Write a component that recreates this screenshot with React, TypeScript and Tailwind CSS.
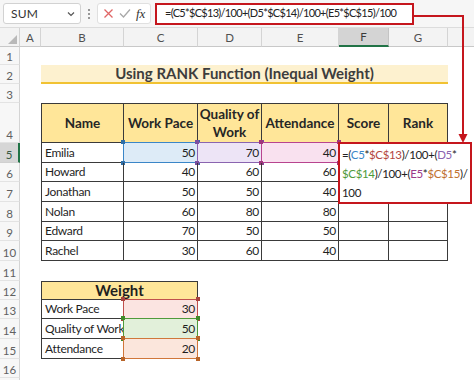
import React from "react";

const COLS = "grid grid-cols-[20px_21px_83px_74px_64px_77px_50px_59px_1fr]";
const BD = "border-[#3a3a3a]";

type Hl = { box: string; sq: string };
const HL_BLUE: Hl = { box: "border-[#3a86c8] bg-[#ddebf7]", sq: "bg-[#2f6fa8]" };
const HL_PURPLE: Hl = { box: "border-[#8a64b0] bg-[#ede4f6]", sq: "bg-[#7a4fa0]" };
const HL_MAGENTA: Hl = { box: "border-[#b8438f] bg-[#f9e1ef]", sq: "bg-[#a0357c]" };
const HL_RED: Hl = { box: "border-[#c0504d] bg-[#fbe4e1]", sq: "bg-[#a8443f]" };
const HL_GREEN: Hl = { box: "border-[#4f9a3a] bg-[#e2f0da]", sq: "bg-[#3f8a2a]" };
const HL_ORANGE: Hl = { box: "border-[#d0773a] bg-[#fbe6dc]", sq: "bg-[#b8652a]" };

function Sel({ hl }: { hl: Hl }) {
  return (
    <div className={`pointer-events-none absolute -left-px -top-px -right-px -bottom-px border-[1.5px] ${hl.box}`}>
      <span className={`absolute -left-[3px] -top-[3px] h-[4px] w-[4px] ${hl.sq}`} />
      <span className={`absolute -right-[3px] -top-[3px] h-[4px] w-[4px] ${hl.sq}`} />
      <span className={`absolute -left-[3px] -bottom-[3px] h-[4px] w-[4px] ${hl.sq}`} />
      <span className={`absolute -right-[3px] -bottom-[3px] h-[4px] w-[4px] ${hl.sq}`} />
    </div>
  );
}

function TCell({
  children,
  first = false,
  num = false,
  hl,
}: {
  children?: React.ReactNode;
  first?: boolean;
  num?: boolean;
  hl?: Hl;
}) {
  return (
    <div className={`relative min-h-0 overflow-visible border-r border-b ${first ? "border-l" : ""} ${BD}`}>
      {hl && <Sel hl={hl} />}
      <div
        className={`relative flex h-full items-center whitespace-nowrap text-[12px] leading-none tracking-[-0.3px] text-[#1f1f1f] ${
          num ? "justify-end pr-[2px]" : "pl-[3px]"
        }`}
      >
        {children}
      </div>
    </div>
  );
}

function RowNum({ n, active = false }: { n: number; active?: boolean }) {
  return (
    <div
      className={`flex items-end justify-center pb-[2px] border-b text-[11.5px] leading-none ${
        active
          ? "border-b-[#d0d0d0] border-r-2 border-r-[#217346] bg-[#d6d6d6] text-[#3a5a44]"
          : "border-b-[#e3e3e3] border-r border-r-[#d4d4d4] bg-[#f7f7f7] text-[#606060]"
      }`}
    >
      {n}
    </div>
  );
}

function HeadCell({ children, first = false }: { children: React.ReactNode; first?: boolean }) {
  return (
    <div
      className={`flex min-h-0 items-center justify-center border-t border-r border-b ${first ? "border-l" : ""} ${BD} bg-[#ffe699] text-center text-[13.5px] font-bold leading-[18px] text-[#262626]`}
    >
      <span className="whitespace-nowrap">{children}</span>
    </div>
  );
}

const rows = [
  { name: "Emilia", c: 50, d: 70, e: 40 },
  { name: "Howard", c: 40, d: 60, e: 60 },
  { name: "Jonathan", c: 50, d: 50, e: 40 },
  { name: "Nolan", c: 60, d: 80, e: 80 },
  { name: "Edward", c: 70, d: 50, e: 50 },
  { name: "Rachel", c: 30, d: 60, e: 40 },
];
const rowHeights = ["h-[20px]", "h-[19px]", "h-[20px]", "h-[20px]", "h-[19px]", "h-[20px]"];

function Empty() {
  return <div />;
}

export default function App() {
  return (
    <div className="relative h-[380px] w-[474px] overflow-hidden bg-white font-['Lato','Open_Sans',sans-serif]">
      {/* Formula bar */}
      <div className="flex h-[28px] items-center border-b border-[#dcdcdc] bg-[#f6f6f6]">
        <div className="ml-[3px] flex h-[21px] w-[78px] items-center justify-between rounded-[3px] border border-[#d2d2d2] bg-white pl-[7px] pr-[4px]">
          <span className="text-[12px] text-[#333] tracking-[0.2px]">SUM</span>
          <svg width="10" height="10" viewBox="0 0 10 10">
            <path d="M2 3.5 L5 6.5 L8 3.5" fill="none" stroke="#555" strokeWidth="1.2" />
          </svg>
        </div>
        <div className="flex w-[16px] flex-col items-center justify-center gap-[2px]">
          <span className="h-[2px] w-[2px] rounded-full bg-[#777]" />
          <span className="h-[2px] w-[2px] rounded-full bg-[#777]" />
          <span className="h-[2px] w-[2px] rounded-full bg-[#777]" />
        </div>
        <div className="flex h-[21px] w-[54px] items-center justify-around rounded-[3px] border border-[#e0e0e0] bg-white px-[2px]">
          <svg width="11" height="11" viewBox="0 0 11 11">
            <path d="M1.5 1.5 L9.5 9.5 M9.5 1.5 L1.5 9.5" stroke="#e06666" strokeWidth="1.3" />
          </svg>
          <svg width="12" height="11" viewBox="0 0 12 11">
            <path d="M1 5.5 L4.5 9 L11 1.5" fill="none" stroke="#a8a8a8" strokeWidth="1.3" />
          </svg>
          <span className="font-['Liberation_Serif',serif] text-[13px] italic text-[#333]">fx</span>
        </div>
        <div className="ml-[4px] flex h-[22px] w-[259px] items-center border-2 border-[#c5161d] bg-white pl-[8px]">
          <span className="whitespace-nowrap text-[11px] tracking-[-0.7px] text-[#222]">
            =(C5*$C$13)/100+(D5*$C$14)/100+(E5*$C$15)/100
          </span>
        </div>
      </div>

      {/* Column header */}
      <div className={`${COLS} h-[18px] bg-[#f3f3f3] text-[11.5px] text-[#505050]`}>
        <div className="relative border-r border-b border-r-[#d4d4d4] border-b-[#c8c8c8]">
          <svg className="absolute bottom-[2px] right-[2px]" width="9" height="9" viewBox="0 0 9 9">
            <polygon points="9,0 9,9 0,9" fill="#b9b9b9" />
          </svg>
        </div>
        {["A", "B", "C", "D", "E"].map((l) => (
          <div key={l} className="flex items-center justify-center border-r border-b border-r-[#d4d4d4] border-b-[#c8c8c8]">
            {l}
          </div>
        ))}
        <div className="flex items-center justify-center border-r border-b-2 border-r-[#c4c4c4] border-b-[#217346] bg-[#d4d4d4] text-[#3a3a3a]">
          F
        </div>
        <div className="flex items-center justify-center border-r border-b border-r-[#d4d4d4] border-b-[#c8c8c8]">G</div>
        <div className="border-b border-b-[#c8c8c8]" />
      </div>

      {/* Row 1 */}
      <div className={`${COLS} h-[19px]`}>
        <RowNum n={1} />
      </div>
      {/* Row 2 title */}
      <div className={`${COLS} h-[19px]`}>
        <RowNum n={2} />
        <Empty />
        <div className="col-span-6 flex items-center justify-center border-b-2 border-[#f1c232] bg-[#fdf1cf] text-[15px] font-bold leading-none text-[#3d3d3d]">
          Using RANK Function (Inequal Weight)
        </div>
      </div>
      {/* Row 3 */}
      <div className={`${COLS} h-[19px]`}>
        <RowNum n={3} />
      </div>
      {/* Row 4 header */}
      <div className={`${COLS} h-[40px] grid-rows-[40px]`}>
        <RowNum n={4} />
        <Empty />
        <HeadCell first>Name</HeadCell>
        <HeadCell>Work Pace</HeadCell>
        <HeadCell>
          Quality of
          <br />
          Work
        </HeadCell>
        <HeadCell>Attendance</HeadCell>
        <HeadCell>Score</HeadCell>
        <HeadCell>Rank</HeadCell>
      </div>
      {/* Rows 5-10 */}
      {rows.map((r, i) => (
        <div key={r.name} className={`${COLS} ${rowHeights[i]}`}>
          <RowNum n={i + 5} active={i === 0} />
          <Empty />
          <TCell first>{r.name}</TCell>
          <TCell num hl={i === 0 ? HL_BLUE : undefined}>{r.c}</TCell>
          <TCell num hl={i === 0 ? HL_PURPLE : undefined}>{r.d}</TCell>
          <TCell num hl={i === 0 ? HL_MAGENTA : undefined}>{r.e}</TCell>
          <TCell />
          <TCell />
        </div>
      ))}
      {/* Row 11 */}
      <div className={`${COLS} h-[20px]`}>
        <RowNum n={11} />
      </div>
      {/* Row 12 */}
      <div className={`${COLS} h-[19px]`}>
        <RowNum n={12} />
        <Empty />
        <div className={`col-span-2 flex items-center justify-center border ${BD} bg-[#ffe699] text-[15px] font-bold leading-none text-[#1f1f1f]`}>
          Weight
        </div>
      </div>
      {/* Row 13 */}
      <div className={`${COLS} h-[19px]`}>
        <RowNum n={13} />
        <Empty />
        <TCell first>Work Pace</TCell>
        <TCell num hl={HL_RED}>30</TCell>
      </div>
      {/* Row 14 */}
      <div className={`${COLS} h-[20px]`}>
        <RowNum n={14} />
        <Empty />
        <TCell first>Quality of Work</TCell>
        <TCell num hl={HL_GREEN}>50</TCell>
      </div>
      {/* Row 15 */}
      <div className={`${COLS} h-[20px]`}>
        <RowNum n={15} />
        <Empty />
        <TCell first>Attendance</TCell>
        <TCell num hl={HL_ORANGE}>20</TCell>
      </div>
      {/* Row 16 */}
      <div className={`${COLS} h-[19px]`}>
        <RowNum n={16} />
      </div>
      <div className={`${COLS} h-[4px]`}>
        <div className="border-r border-r-[#d4d4d4] bg-[#f7f7f7]" />
      </div>

      {/* Formula overlay in F5 */}
      <div className="absolute left-[338px] top-[142px] h-[62px] w-[134px] border-2 border-[#c5161d] bg-white px-[2px] pt-[1px] text-[11.5px] leading-[19px] tracking-[-0.35px] text-[#222]">
        <div className="whitespace-nowrap">
          =(<span className="text-[#3a86c8]">C5</span>*<span className="text-[#b4473f]">$C$13</span>)/100+(
          <span className="text-[#8a64b0]">D5</span>*
        </div>
        <div className="whitespace-nowrap">
          <span className="text-[#4f9a3a]">$C$14</span>)/100+(<span className="text-[#9a3a8a]">E5</span>*
          <span className="text-[#c0702f]">$C$15</span>)/
        </div>
        <div>100</div>
      </div>

      {/* Arrow */}
      <svg className="pointer-events-none absolute left-0 top-0" width="474" height="380">
        <path d="M413 16 H463 V135" fill="none" stroke="#c5161d" strokeWidth="2" />
        <polygon points="458.5,134 467.5,134 463,143" fill="#c5161d" />
      </svg>
    </div>
  );
}
